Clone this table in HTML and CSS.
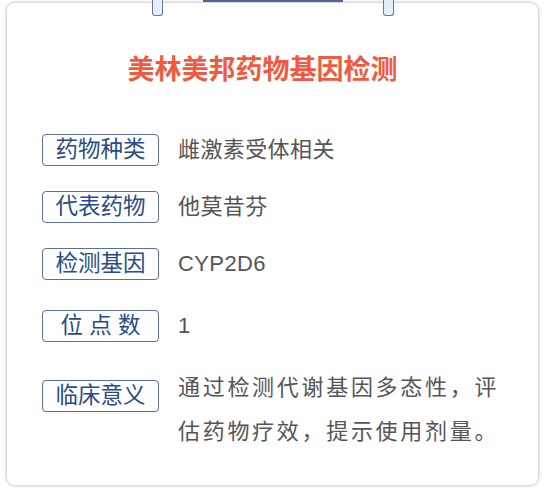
FILE: index.html
```html
<!DOCTYPE html>
<html lang="zh-CN">
<head>
    <meta charset="UTF-8">
    <meta name="viewport" content="width=device-width, initial-scale=1.0">
    <title>美林美邦药物基因检测</title>
    <link rel="stylesheet" href="styles.css">
</head>
<body>
    <div class="top-bar"></div>
    <div class="card">
        <span class="clip clip-left"></span>
        <span class="clip clip-right"></span>

        <h1 class="title">美林美邦药物基因检测</h1>

        <div class="row">
            <span class="tag">药物种类</span>
            <span class="value">雌激素受体相关</span>
        </div>
        <div class="row">
            <span class="tag">代表药物</span>
            <span class="value">他莫昔芬</span>
        </div>
        <div class="row row-gene">
            <span class="tag">检测基因</span>
            <span class="value">CYP2D6</span>
        </div>
        <div class="row row-sites">
            <span class="tag">位 点 数</span>
            <span class="value">1</span>
        </div>
        <div class="row">
            <span class="tag">临床意义</span>
            <span class="value value-long">通过检测代谢基因多态性，评估药物疗效，提示使用剂量。</span>
        </div>
    </div>
</body>
</html>
```

FILE: styles.css
```css
body {
    margin: 0;
    background: #ffffff;
    font-family: "Liberation Sans", "Noto Sans CJK SC", sans-serif;
}
.top-bar {
    position: absolute;
    left: 203px;
    top: 0;
    width: 140px;
    height: 2px;
    background: #5d6192;
    z-index: 2;
}
.card {
    position: relative;
    margin: 3px 6px 7px 7px;
    height: 482px;
    box-sizing: border-box;
    padding: 48px 20px 0 35px;
    background: #ffffff;
    border-radius: 8px;
    box-shadow: 0 0 3px 1px rgba(120, 128, 160, 0.45);
}
.clip {
    position: absolute;
    top: -3px;
    width: 9px;
    height: 15px;
    background: #e4eefc;
    border: 1px solid #6b7595;
    border-top: none;
    border-radius: 0 0 3px 3px;
}
.clip-left { left: 145px; }
.clip-right { left: 376px; }
.title {
    margin: 0 0 45px -35px;
    text-align: center;
    font-size: 27px;
    line-height: 38px;
    font-weight: bold;
    color: #ef5a41;
}
.row {
    display: flex;
    align-items: flex-start;
    gap: 19px;
    margin-bottom: 25px;
}
.row-gene { margin-bottom: 30px; }
.row-sites { margin-bottom: 38px; }
.tag {
    flex: none;
    width: 115px;
    height: 30px;
    border: 1px solid #5b6f98;
    border-radius: 4px;
    text-align: center;
    font-size: 22.5px;
    line-height: 30px;
    color: #2a4c84;
    white-space: pre;
}
.value {
    font-size: 22px;
    line-height: 32px;
    letter-spacing: 0.4px;
    color: #555555;
}
.value-long {
    width: 336px;
    line-height: 44px;
    margin-top: -14px;
    letter-spacing: 2.7px;
}
```
